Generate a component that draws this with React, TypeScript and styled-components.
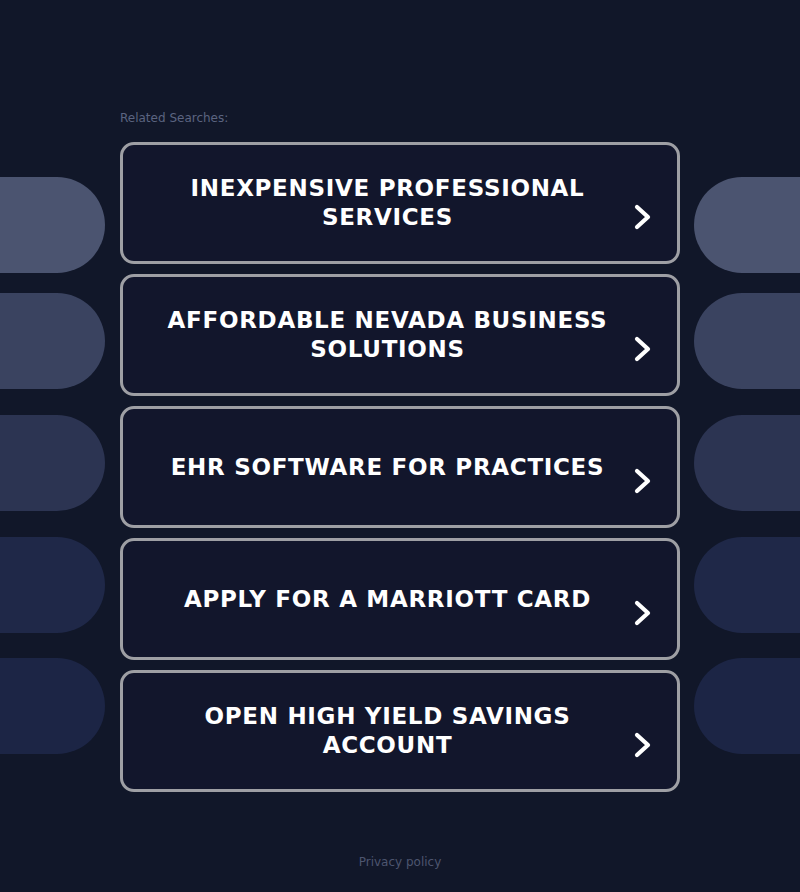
import React from 'react'
import styled, { createGlobalStyle } from 'styled-components'

const GlobalStyle = createGlobalStyle`
	html, body {
		margin: 0;
		padding: 0;
		background: #111729;
	}
	body {
		font-family: "DejaVu Sans", "Liberation Sans", sans-serif;
	}
`

const Page = styled.div`
	position: relative;
	width: 800px;
	height: 892px;
	overflow: hidden;
	background: #111729;
`

const Pill = styled.div<{ $side: 'left' | 'right'; $top: number; $color: string }>`
	position: absolute;
	top: ${(p) => p.$top}px;
	${(p) => (p.$side === 'left' ? 'left: -95px;' : 'left: 694px;')}
	width: 200px;
	height: 96px;
	border-radius: 48px;
	background: ${(p) => p.$color};
`

const Content = styled.main`
	position: relative;
	width: 560px;
	margin: 0 auto;
	padding-top: 111px;
	display: flex;
	flex-direction: column;
`

const Label = styled.p`
	margin: 0 0 16px;
	font-size: 12px;
	line-height: 15px;
	color: #5b6480;
`

const List = styled.div`
	display: flex;
	flex-direction: column;
	gap: 10px;
`

const Card = styled.a`
	box-sizing: border-box;
	height: 122px;
	display: flex;
	align-items: center;
	border: 3px solid #9e9fa4;
	border-radius: 14px;
	background: #12162c;
	text-decoration: none;
	padding: 0 23px 0 32px;
`

const Title = styled.span`
	flex: 1;
	text-align: center;
	color: #ffffff;
	font-weight: bold;
	font-size: 23px;
	line-height: 29px;
	letter-spacing: 0.7px;
	text-transform: uppercase;
`

const Chevron = styled.svg`
	flex: none;
	width: 22px;
	height: 28px;
	margin-left: 12px;
	margin-top: 28px;
`

const Footer = styled.a`
	position: absolute;
	left: 0;
	right: 0;
	top: 855px;
	text-align: center;
	font-size: 12px;
	line-height: 15px;
	color: #4d556f;
	text-decoration: none;
`

const searches = [
	'Inexpensive Professional Services',
	'Affordable Nevada Business Solutions',
	'EHR Software for Practices',
	'Apply for a Marriott Card',
	'Open High Yield Savings Account',
]

const pills = [
	{ top: 177, color: '#4b5470' },
	{ top: 293, color: '#3a4360' },
	{ top: 415, color: '#2c3452' },
	{ top: 537, color: '#1f2848' },
	{ top: 658, color: '#1c2545' },
]

export default function App() {
	return (
		<Page>
			<GlobalStyle />
			{pills.map((p, i) => (
				<React.Fragment key={i}>
					<Pill $side="left" $top={p.top} $color={p.color} />
					<Pill $side="right" $top={p.top} $color={p.color} />
				</React.Fragment>
			))}
			<Content>
				<Label>Related Searches:</Label>
				<List>
					{searches.map((s) => (
						<Card key={s} href="#">
							<Title>{s}</Title>
							<Chevron viewBox="0 0 22 28">
								<path
									d="M5 4 L16 14 L5 24"
									fill="none"
									stroke="#ffffff"
									strokeWidth="4.2"
									strokeLinecap="round"
									strokeLinejoin="round"
								/>
							</Chevron>
						</Card>
					))}
				</List>
			</Content>
			<Footer href="#">Privacy policy</Footer>
		</Page>
	)
}
